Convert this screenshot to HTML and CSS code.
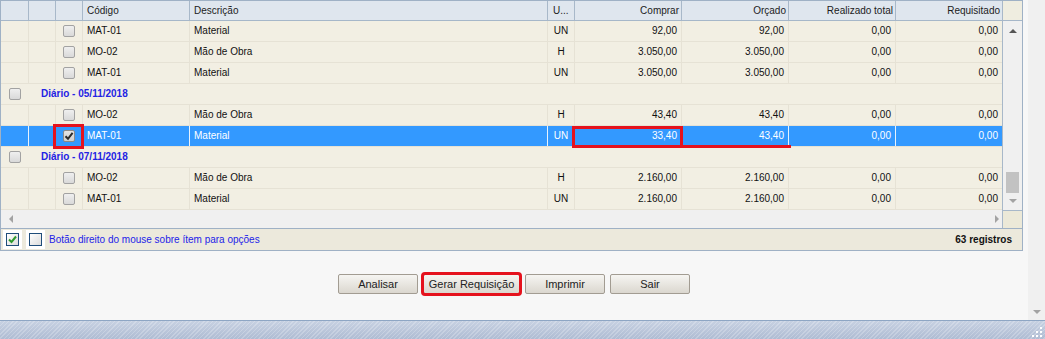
FILE: index.html
```html
<!DOCTYPE html>
<html lang="pt-BR">
<head>
    <meta charset="UTF-8">
    <title>Requisição de materiais</title>
    <link rel="stylesheet" href="styles.css">
</head>
<body>
    <div class="window">
        <div class="main">
            <div class="grid">
                <div class="grid-head">
                    <div class="hc c-a"></div>
                    <div class="hc c-b"></div>
                    <div class="hc c-chk"></div>
                    <div class="hc c-cod">Código</div>
                    <div class="hc c-desc">Descrição</div>
                    <div class="hc c-un">U...</div>
                    <div class="hc c-num num">Comprar</div>
                    <div class="hc c-num num">Orçado</div>
                    <div class="hc c-num num">Realizado total</div>
                    <div class="hc c-last num">Requisitado</div>
                    <div class="hc corner"></div>
                </div>

                <div class="grid-body">
                    <div class="rows">
                        <div class="row">
                            <div class="cell c-a"></div>
                            <div class="cell c-b"></div>
                            <div class="cell c-chk"><span class="cb"></span></div>
                            <div class="cell c-cod">MAT-01</div>
                            <div class="cell c-desc">Material</div>
                            <div class="cell c-un">UN</div>
                            <div class="cell c-num num">92,00</div>
                            <div class="cell c-num num">92,00</div>
                            <div class="cell c-num num">0,00</div>
                            <div class="cell c-last num">0,00</div>
                        </div>
                        <div class="row">
                            <div class="cell c-a"></div>
                            <div class="cell c-b"></div>
                            <div class="cell c-chk"><span class="cb"></span></div>
                            <div class="cell c-cod">MO-02</div>
                            <div class="cell c-desc">Mão de Obra</div>
                            <div class="cell c-un">H</div>
                            <div class="cell c-num num">3.050,00</div>
                            <div class="cell c-num num">3.050,00</div>
                            <div class="cell c-num num">0,00</div>
                            <div class="cell c-last num">0,00</div>
                        </div>
                        <div class="row">
                            <div class="cell c-a"></div>
                            <div class="cell c-b"></div>
                            <div class="cell c-chk"><span class="cb"></span></div>
                            <div class="cell c-cod">MAT-01</div>
                            <div class="cell c-desc">Material</div>
                            <div class="cell c-un">UN</div>
                            <div class="cell c-num num">3.050,00</div>
                            <div class="cell c-num num">3.050,00</div>
                            <div class="cell c-num num">0,00</div>
                            <div class="cell c-last num">0,00</div>
                        </div>
                        <div class="row group">
                            <div class="gcell"><span class="cb"></span></div>
                            <div class="gtitle">Diário - 05/11/2018</div>
                        </div>
                        <div class="row">
                            <div class="cell c-a"></div>
                            <div class="cell c-b"></div>
                            <div class="cell c-chk"><span class="cb"></span></div>
                            <div class="cell c-cod">MO-02</div>
                            <div class="cell c-desc">Mão de Obra</div>
                            <div class="cell c-un">H</div>
                            <div class="cell c-num num">43,40</div>
                            <div class="cell c-num num">43,40</div>
                            <div class="cell c-num num">0,00</div>
                            <div class="cell c-last num">0,00</div>
                        </div>
                        <div class="row selected">
                            <div class="cell c-a"></div>
                            <div class="cell c-b"></div>
                            <div class="cell c-chk">
                                <span class="cb checked">
                                    <svg width="10" height="10" viewBox="0 0 10 10"><path d="M1.5 5.2 L4 7.8 L8.6 1.8" fill="none" stroke="#2b2b2b" stroke-width="2"/></svg>
                                </span>
                                <span class="mark mark-cb"></span>
                            </div>
                            <div class="cell c-cod">MAT-01</div>
                            <div class="cell c-desc">Material</div>
                            <div class="cell c-un">UN</div>
                            <div class="cell c-num num">33,40<span class="mark mark-buy"></span></div>
                            <div class="cell c-num num">43,40<span class="mark-line"></span></div>
                            <div class="cell c-num num">0,00</div>
                            <div class="cell c-last num">0,00</div>
                        </div>
                        <div class="row group">
                            <div class="gcell"><span class="cb"></span></div>
                            <div class="gtitle">Diário - 07/11/2018</div>
                        </div>
                        <div class="row">
                            <div class="cell c-a"></div>
                            <div class="cell c-b"></div>
                            <div class="cell c-chk"><span class="cb"></span></div>
                            <div class="cell c-cod">MO-02</div>
                            <div class="cell c-desc">Mão de Obra</div>
                            <div class="cell c-un">H</div>
                            <div class="cell c-num num">2.160,00</div>
                            <div class="cell c-num num">2.160,00</div>
                            <div class="cell c-num num">0,00</div>
                            <div class="cell c-last num">0,00</div>
                        </div>
                        <div class="row">
                            <div class="cell c-a"></div>
                            <div class="cell c-b"></div>
                            <div class="cell c-chk"><span class="cb"></span></div>
                            <div class="cell c-cod">MAT-01</div>
                            <div class="cell c-desc">Material</div>
                            <div class="cell c-un">UN</div>
                            <div class="cell c-num num">2.160,00</div>
                            <div class="cell c-num num">2.160,00</div>
                            <div class="cell c-num num">0,00</div>
                            <div class="cell c-last num">0,00</div>
                        </div>
                    </div>
                    <div class="vscroll">
                        <span class="arr arr-up"></span>
                        <span class="thumb"></span>
                        <span class="arr arr-down"></span>
                    </div>
                </div>

                <div class="hscroll-row">
                    <div class="hscroll">
                        <span class="arr arr-left"></span>
                        <span class="arr arr-right"></span>
                    </div>
                    <div class="hs-corner"></div>
                </div>

                <div class="grid-foot">
                    <span class="fbox">
                        <svg width="11" height="11" viewBox="0 0 11 11"><path d="M2 5.5 L4.5 8 L9 2.5" fill="none" stroke="#2e9a2e" stroke-width="2"/></svg>
                    </span>
                    <span class="fbox"></span>
                    <span class="hint">Botão direito do mouse sobre ítem para opções</span>
                    <span class="count">63 registros</span>
                </div>
            </div>

            <div class="actions">
                <button class="btn">Analisar</button>
                <button class="btn btn-wide marked">Gerar Requisição</button>
                <button class="btn">Imprimir</button>
                <button class="btn">Sair</button>
            </div>
        </div>
        <div class="page-scroll">
            <span class="arr arr-down"></span>
        </div>
    </div>
    <div class="statusbar">
        <svg class="grip" width="12" height="12" viewBox="0 0 12 12">
            <rect x="9" y="1" width="2" height="2" fill="#fff"/>
            <rect x="5" y="5" width="2" height="2" fill="#fff"/>
            <rect x="9" y="5" width="2" height="2" fill="#fff"/>
            <rect x="1" y="9" width="2" height="2" fill="#fff"/>
            <rect x="5" y="9" width="2" height="2" fill="#fff"/>
            <rect x="9" y="9" width="2" height="2" fill="#fff"/>
        </svg>
    </div>
</body>
</html>
```

FILE: styles.css
```css
body {
    margin: 0;
    font-family: "Liberation Sans", Arial, sans-serif;
    font-size: 10px;
    color: #111;
    background-color: #f7f7f7;
}
.window {
    display: flex;
    height: 320px;
}
.main {
    flex: 1;
}
.page-scroll {
    width: 17px;
    background-color: #f0f0f0;
    display: flex;
    flex-direction: column;
    justify-content: flex-end;
    align-items: center;
    padding-bottom: 6px;
    box-sizing: border-box;
}

/* grid */
.grid {
    width: 1023px;
    border: 1px solid #9fb1c5;
    box-sizing: border-box;
}
.grid-head {
    display: flex;
    height: 20px;
    box-sizing: border-box;
    background-color: #dfe6ee;
    border-bottom: 1px solid #a6b7c9;
    line-height: 19px;
    color: #1c1c1c;
}
.hc {
    box-sizing: border-box;
    border-right: 1px solid #a8b8c9;
    padding: 0 4px;
    white-space: nowrap;
    overflow: hidden;
}
.hc.c-un {
    padding-left: 5px;
}
.hc.corner {
    width: 20px;
    border-right: none;
    border-left: 1px solid #a8b8c9;
    background-color: #efede0;
}
.c-a { width: 28px; }
.c-b { width: 27px; }
.c-chk { width: 27px; }
.c-cod { width: 107px; }
.c-desc { width: 358px; }
.c-un { width: 27px; }
.c-num { width: 107px; }
.c-last { width: 106px; border-right: none !important; }
.num {
    text-align: right;
    padding-right: 2px;
}

.grid-body {
    display: flex;
}
.rows {
    width: 1001px;
    background-color: #f2efe3;
}
.row {
    display: flex;
    height: 21px;
    box-sizing: border-box;
    border-bottom: 1px solid #e6e2d5;
    line-height: 20px;
}
.cell {
    box-sizing: border-box;
    border-right: 1px solid #e6e2d5;
    padding: 0 4px;
    white-space: nowrap;
    position: relative;
}
.cell.c-un {
    padding: 0;
    text-align: center;
}
.cell.c-chk {
    display: flex;
    justify-content: center;
    align-items: center;
}
.row.selected {
    background-color: #3399ff;
    color: #fff;
}
.row.selected .cell {
    border-right-color: #e8f2fd;
}
.row.group {
    align-items: center;
}
.gcell {
    width: 28px;
    display: flex;
    justify-content: center;
}
.gtitle {
    padding-left: 12px;
    font-weight: bold;
    color: #2323e4;
}

.cb {
    display: inline-flex;
    align-items: center;
    justify-content: center;
    width: 12px;
    height: 12px;
    box-sizing: border-box;
    border: 1px solid #a2a2a2;
    border-radius: 2px;
    background: linear-gradient(#efefef, #d9d9d9);
}
.cb.checked {
    background: linear-gradient(#e4e4e4, #cfcfcf);
    border-color: #8a8a8a;
}

/* annotations drawn over the grid */
.mark {
    position: absolute;
    box-sizing: border-box;
    border: 3px solid #e5121d;
}
.mark-cb {
    left: -3px;
    top: -2px;
    width: 31px;
    height: 25px;
}
.mark-buy {
    left: -3px;
    top: 0;
    width: 111px;
    height: 22px;
}
.mark-line {
    position: absolute;
    left: 0;
    top: 19px;
    width: 109px;
    height: 3px;
    background-color: #e5121d;
}

/* scrollbars */
.vscroll {
    width: 20px;
    box-sizing: border-box;
    border-left: 1px solid #a8b8c9;
    background-color: #f0f0f0;
    display: flex;
    flex-direction: column;
    align-items: center;
    padding: 8px 0 7px;
}
.thumb {
    margin-top: auto;
    width: 13px;
    height: 21px;
    background-color: #c2c2c2;
}
.arr {
    width: 0;
    height: 0;
    display: block;
}
.arr-up {
    border-left: 4px solid transparent;
    border-right: 4px solid transparent;
    border-bottom: 4px solid #555;
}
.arr-down {
    margin-top: 6px;
    border-left: 4px solid transparent;
    border-right: 4px solid transparent;
    border-top: 4px solid #a3a3a3;
}
.arr-left {
    border-top: 4px solid transparent;
    border-bottom: 4px solid transparent;
    border-right: 4px solid #a3a3a3;
}
.arr-right {
    border-top: 4px solid transparent;
    border-bottom: 4px solid transparent;
    border-left: 4px solid #a3a3a3;
}
.hscroll-row {
    display: flex;
    height: 18px;
}
.hscroll {
    width: 1001px;
    box-sizing: border-box;
    background-color: #f0f0f0;
    display: flex;
    align-items: center;
    justify-content: space-between;
    padding: 0 3px 0 8px;
}
.hs-corner {
    width: 20px;
    box-sizing: border-box;
    border-left: 1px solid #a8b8c9;
    border-top: 1px solid #a8b8c9;
    background-color: #ece9d8;
}

/* footer of the grid */
.grid-foot {
    display: flex;
    align-items: center;
    height: 22px;
    box-sizing: border-box;
    border-top: 1px solid #9fb1c5;
    background-color: #ece9dc;
}
.fbox {
    display: inline-flex;
    align-items: center;
    justify-content: center;
    width: 13px;
    height: 13px;
    box-sizing: border-box;
    border: 1px solid #1f4d7a;
    background: linear-gradient(135deg, #ffffff, #dcdcdc);
    box-shadow: 0 0 0 3px #fff;
    margin-left: 5px;
}
.fbox + .fbox {
    margin-left: 10px;
}
.hint {
    margin-left: 7px;
    color: #2323e8;
}
.count {
    margin-left: auto;
    padding-right: 10px;
    font-weight: bold;
}

/* buttons */
.actions {
    display: flex;
    justify-content: center;
    gap: 5px;
    margin-top: 23px;
}
.btn {
    width: 80px;
    height: 20px;
    padding: 0;
    font-family: "Liberation Sans", Arial, sans-serif;
    font-size: 11px;
    color: #222;
    border: 1px solid #a29c92;
    border-radius: 2px;
    background: linear-gradient(#f6f5f2, #dbd7cf);
}
.btn-wide {
    width: 97px;
}
.btn.marked {
    outline: 3px solid #e5121d;
    outline-offset: -1px;
}

.statusbar {
    height: 19px;
    box-sizing: border-box;
    border-top: 1px solid #8ea6c4;
    background:
        repeating-linear-gradient(135deg, rgba(255, 255, 255, 0.22) 0 1px, transparent 1px 3px),
        linear-gradient(#c7d1e2, #afbcd3);
    display: flex;
    justify-content: flex-end;
    align-items: flex-end;
    padding: 0 2px 1px 0;
}
```
